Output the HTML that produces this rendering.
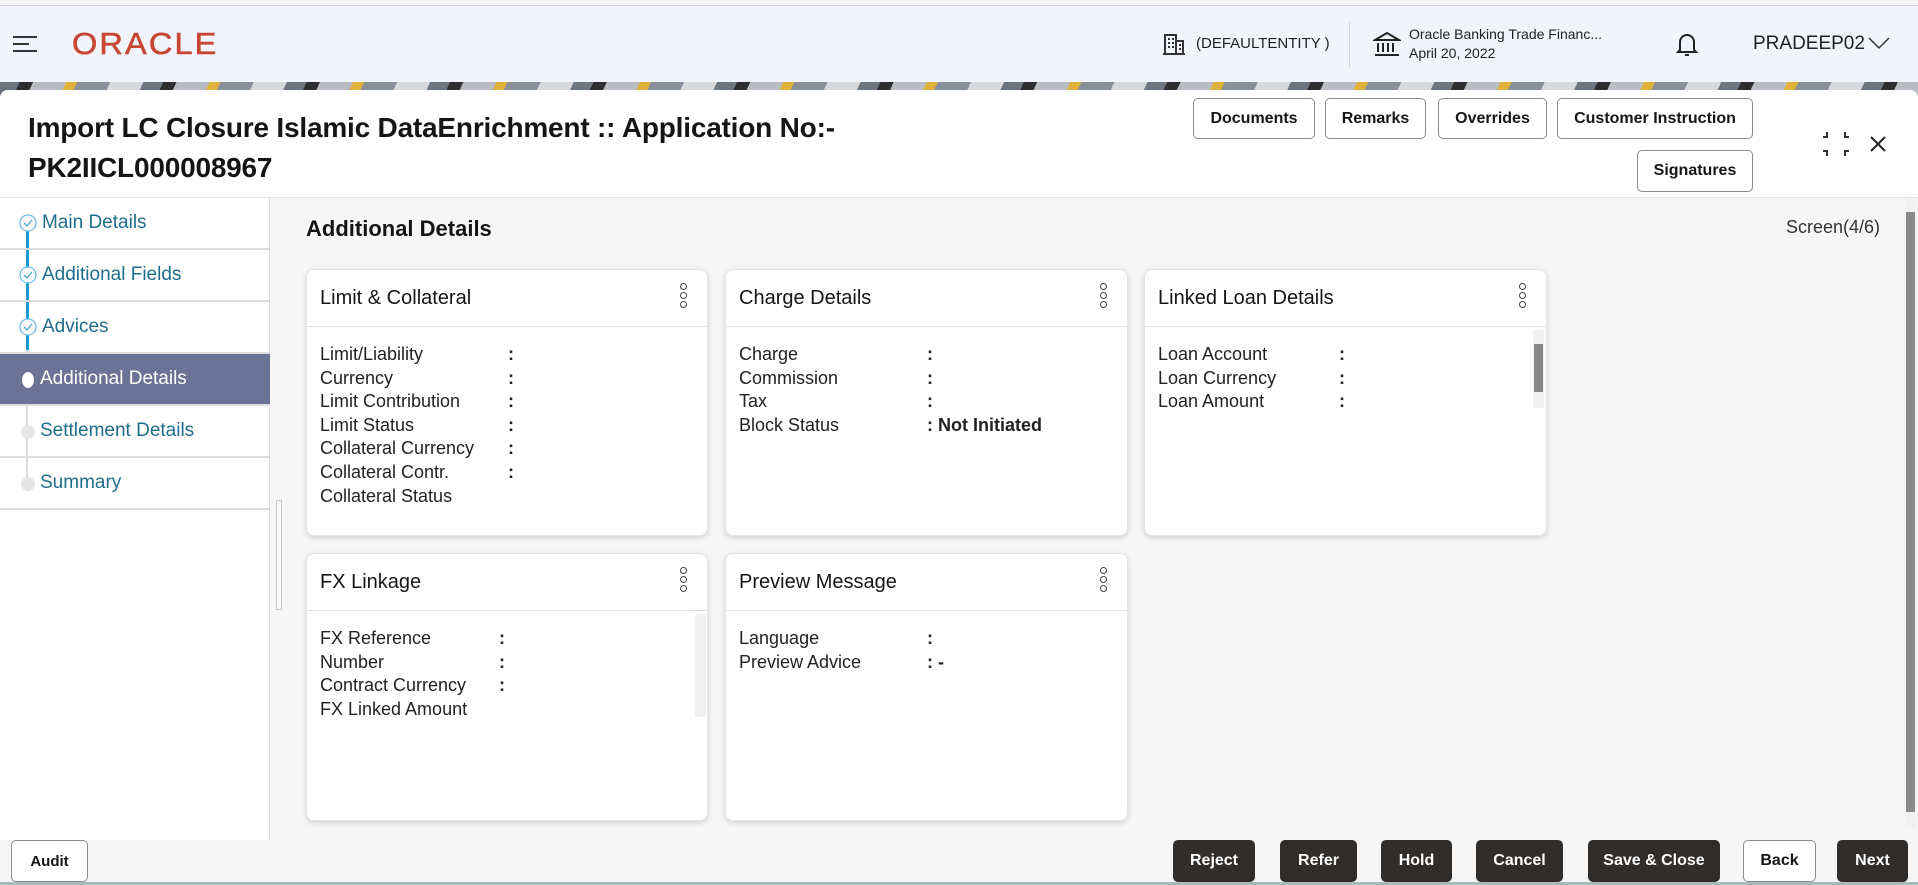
<!DOCTYPE html>
<html><head><meta charset="utf-8"><style>
*{margin:0;padding:0;box-sizing:border-box}
body{width:1918px;height:885px;overflow:hidden;font-family:"Liberation Sans",sans-serif;background:#f5f5f5;position:relative;color:#161513}
.abs{position:absolute}
.hdr{left:0;top:5px;width:1918px;height:77px;background:#f1f4fc;border-top:1px solid #d0d0d0}
.strip{left:0;top:82px;width:1918px;height:14px;background:repeating-linear-gradient(115deg,#6d7580 0 18px,#2e2e30 18px 30px,#b9bcc2 30px 60px,#e0b23a 60px 70px,#8a9099 70px 100px,#d7d9dc 100px 130px)}
.panel{left:0;top:90px;width:1918px;height:795px;background:#f6f6f6;border-radius:8px 8px 0 0}
.top{left:0;top:90px;width:1918px;height:108px;background:#fff;border-radius:8px 8px 0 0;border-bottom:1px solid #e2e2e2}
.btn{position:absolute;border:1px solid #8c8c8c;border-radius:5px;background:#fff;font-size:16px;font-weight:bold;display:flex;align-items:center;justify-content:center;color:#161513}
.side{left:0;top:198px;width:270px;height:642px;background:#fff;border-right:1px solid #ddd}
.it{position:absolute;left:0;width:270px;height:52px;border-bottom:2px solid #ddd;font-size:19px;color:#1f6d8c;padding-left:42px;display:flex;align-items:center}
.card{position:absolute;background:#fff;border-radius:8px;box-shadow:0 2px 6px rgba(0,0,0,.15);border:1px solid #e4e4e4}
.ch{height:57px;border-bottom:1px solid #e2e2e2;font-size:20px;padding-left:13px;display:flex;align-items:center;position:relative}
.keb{position:absolute;right:20px;top:13px;width:7px}
.keb i{display:block;width:7px;height:7px;border:1.3px solid #444;border-radius:50%;margin-bottom:2px}
.rows{padding:16px 0 0 13px;font-size:18px;line-height:23.6px;color:#222;position:relative}
.rows div{position:relative;white-space:nowrap}
.rows b{position:absolute;font-weight:bold}
.fb{position:absolute;top:840px;height:42px;background:#312d2a;color:#fff;border-radius:5px;font-size:16px;font-weight:bold;display:flex;align-items:center;justify-content:center}
.sb{position:absolute;width:11px;background:#f1f1f1}
.sb i{position:absolute;left:1px;width:9px;background:#888}
</style></head><body>
<div class="abs hdr"></div>
<svg class="abs" style="left:12px;top:34px" width="30" height="20"><path d="M1 3h24M1 10h16M1 17h24" stroke="#333" stroke-width="2"/></svg>
<div class="abs" style="left:72px;top:26px;font-size:31px;color:#c74634;letter-spacing:2px;transform:scaleX(1.05);transform-origin:left;-webkit-text-stroke:0.6px #c74634">ORACLE</div>
<svg class="abs" style="left:1162px;top:32px" width="24" height="24" fill="none" stroke="#333" stroke-width="2"><path d="M3 22V3h11v19M14 9h7v13M1 22h22M6 7h2M10 7h2M6 11h2M10 11h2M6 15h2M10 15h2M17 13h2M17 17h2"/></svg>
<div class="abs" style="left:1196px;top:35px;font-size:15px;color:#222">(DEFAULTENTITY )</div>
<div class="abs" style="left:1349px;top:22px;width:1px;height:45px;background:#d5d5d5"></div>
<svg class="abs" style="left:1373px;top:31px" width="28" height="26" fill="none" stroke="#222" stroke-width="2"><path d="M2 9L14 2l12 7zM5 12v9M10 12v9M15 12v9M20 12v9M2 24h24"/></svg>
<div class="abs" style="left:1409px;top:25px;font-size:14px;color:#222;line-height:19px">Oracle Banking Trade Financ...<br>April 20, 2022</div>
<svg class="abs" style="left:1676px;top:31px" width="22" height="26" fill="none" stroke="#222" stroke-width="2"><path d="M4 19V11a7 7 0 0114 0v8l2 2H2zM9 24h4"/></svg>
<div class="abs" style="left:1753px;top:33px;font-size:19px;color:#222">PRADEEP02</div>
<svg class="abs" style="left:1868px;top:36px" width="22" height="14" fill="none" stroke="#333" stroke-width="1.5"><path d="M1 2l10 10 10-10"/></svg>
<div class="abs strip"></div>
<div class="abs panel"></div>
<div class="abs top"></div>
<div class="abs" style="left:28px;top:108px;font-size:28px;font-weight:bold;line-height:40px;letter-spacing:-.2px">Import LC Closure Islamic DataEnrichment :: Application No:-<br>PK2IICL000008967</div>
<div class="btn" style="left:1193px;top:98px;width:122px;height:41px">Documents</div>
<div class="btn" style="left:1325px;top:98px;width:101px;height:41px">Remarks</div>
<div class="btn" style="left:1438px;top:98px;width:109px;height:41px">Overrides</div>
<div class="btn" style="left:1557px;top:98px;width:196px;height:41px">Customer Instruction</div>
<div class="btn" style="left:1637px;top:150px;width:116px;height:42px">Signatures</div>
<svg class="abs" style="left:1823px;top:131px" width="26" height="26" fill="none" stroke="#333" stroke-width="2"><path d="M4 1v5H0M22 1v5h4M4 25v-5H0M22 25v-5h4"/></svg>
<svg class="abs" style="left:1870px;top:136px" width="16" height="16" fill="none" stroke="#222" stroke-width="2"><path d="M1 1l14 14M15 1L1 15"/></svg>
<div class="abs side"></div>
<div class="abs" style="left:26px;top:220px;width:3px;height:130px;background:#1b9bd1"></div>
<div class="abs" style="left:26px;top:350px;width:2px;height:130px;background:#ddd"></div>
<div class="it" style="top:198px">Main Details</div>
<div class="it" style="top:250px">Additional Fields</div>
<div class="it" style="top:302px">Advices</div>
<div class="it" style="top:354px;background:#6b7396;color:#fff;padding-left:40px">Additional Details</div>
<div class="it" style="top:406px;padding-left:40px">Settlement Details</div>
<div class="it" style="top:458px;padding-left:40px">Summary</div>
<svg class="abs" style="left:19px;top:214px" width="18" height="300">
<g fill="#fff" stroke="#6cc0e5" stroke-width="1.3"><circle cx="9" cy="9" r="8"/><circle cx="9" cy="61" r="8"/><circle cx="9" cy="113" r="8"/></g>
<g fill="none" stroke="#4aa6d0" stroke-width="1.3"><path d="M5 9l3 3 5-6M5 61l3 3 5-6M5 113l3 3 5-6"/></g>
<ellipse cx="9" cy="166" rx="6" ry="8" fill="#fff"/>
<circle cx="9" cy="218" r="7" fill="#e6e6e6"/><circle cx="9" cy="270" r="7" fill="#e6e6e6"/>
</svg>
<div class="abs" style="left:276px;top:500px;width:6px;height:110px;border:1px solid #ccc;background:#fafafa"></div>
<div class="abs" style="left:306px;top:216px;font-size:22px;font-weight:bold">Additional Details</div>
<div class="abs" style="left:1786px;top:217px;font-size:18px;color:#333">Screen(4/6)</div>

<div class="card" style="left:306px;top:269px;width:402px;height:267px"><div class="ch">Limit &amp; Collateral<div class="keb"><i></i><i></i><i></i></div></div>
<div class="rows"><div>Limit/Liability<b style="left:188px">:</b></div><div>Currency<b style="left:188px">:</b></div><div>Limit Contribution<b style="left:188px">:</b></div><div>Limit Status<b style="left:188px">:</b></div><div>Collateral Currency<b style="left:188px">:</b></div><div>Collateral Contr.<b style="left:188px">:</b></div><div>Collateral Status</div></div></div>

<div class="card" style="left:725px;top:269px;width:403px;height:267px"><div class="ch">Charge Details<div class="keb"><i></i><i></i><i></i></div></div>
<div class="rows"><div>Charge<b style="left:188px">:</b></div><div>Commission<b style="left:188px">:</b></div><div>Tax<b style="left:188px">:</b></div><div>Block Status<b style="left:188px">: Not Initiated</b></div></div></div>

<div class="card" style="left:1144px;top:269px;width:403px;height:267px"><div class="ch">Linked Loan Details<div class="keb"><i></i><i></i><i></i></div></div>
<div class="rows"><div>Loan Account<b style="left:181px">:</b></div><div>Loan Currency<b style="left:181px">:</b></div><div>Loan Amount<b style="left:181px">:</b></div></div>
<div class="sb" style="left:388px;top:60px;height:78px"><i style="top:14px;height:48px"></i></div></div>

<div class="card" style="left:306px;top:553px;width:402px;height:268px"><div class="ch">FX Linkage<div class="keb"><i></i><i></i><i></i></div></div>
<div class="rows"><div>FX Reference<b style="left:179px">:</b></div><div>Number<b style="left:179px">:</b></div><div>Contract Currency<b style="left:179px">:</b></div><div>FX Linked Amount</div></div>
<div class="sb" style="left:388px;top:60px;height:103px"></div></div>

<div class="card" style="left:725px;top:553px;width:403px;height:268px"><div class="ch">Preview Message<div class="keb"><i></i><i></i><i></i></div></div>
<div class="rows"><div>Language<b style="left:188px">:</b></div><div>Preview Advice<b style="left:188px">: -</b></div></div></div>

<div class="sb" style="left:1905px;top:198px;height:630px;background:#f1f1f1"><i style="top:14px;height:600px;background:#8a8a8a"></i></div>

<div class="btn" style="left:11px;top:840px;width:77px;height:42px;font-size:15px">Audit</div>
<div class="fb" style="left:1173px;width:82px">Reject</div>
<div class="fb" style="left:1280px;width:77px">Refer</div>
<div class="fb" style="left:1381px;width:71px">Hold</div>
<div class="fb" style="left:1476px;width:87px">Cancel</div>
<div class="fb" style="left:1588px;width:132px">Save &amp; Close</div>
<div class="btn" style="left:1743px;top:840px;width:73px;height:42px">Back</div>
<div class="fb" style="left:1837px;width:71px">Next</div>
<div class="abs" style="left:0;top:882px;width:1918px;height:3px;background:#a9b9b9"></div>
</body></html>
